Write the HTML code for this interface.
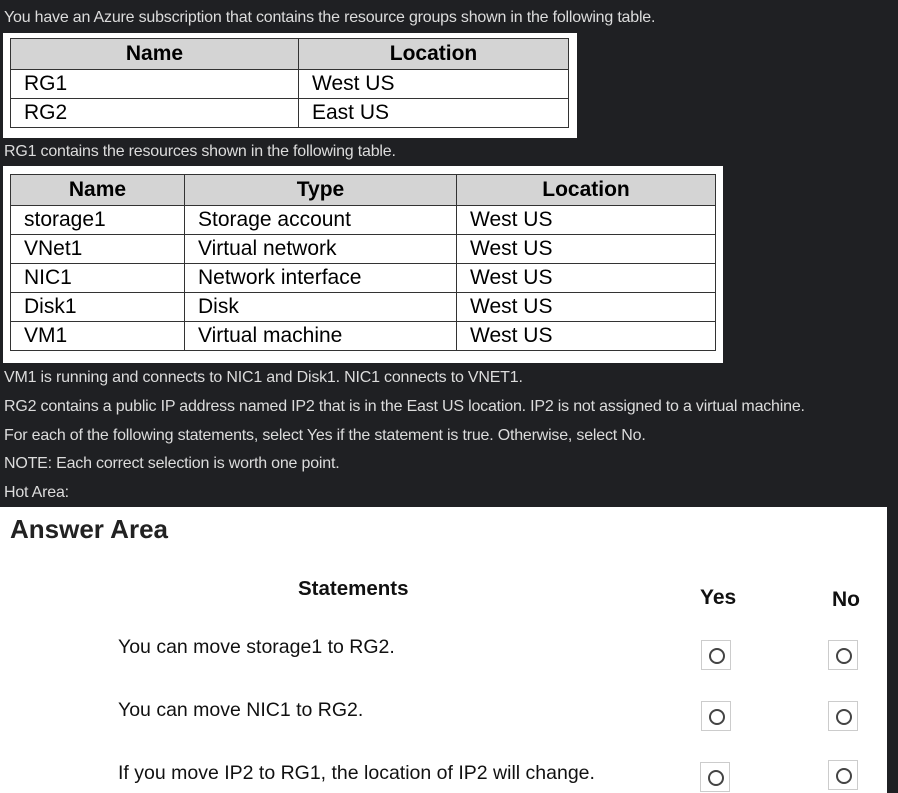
<!DOCTYPE html>
<html><head><style>
body{margin:0;width:898px;height:793px;background:#1f2023;position:relative;overflow:hidden;font-family:"Liberation Sans",Arial,sans-serif}
.t{position:absolute;left:4px;color:#dcdcdc;font-size:16px;letter-spacing:-0.2px;white-space:nowrap;line-height:20px}
.box{position:absolute;background:#fff}
table{position:absolute;border-collapse:collapse;font-size:21px;color:#000}
td,th{border:1.5px solid #333;padding:0 0 0 13px;text-align:left;font-weight:normal;height:28px;line-height:28px}
th{background:#d4d4d4;font-weight:bold;text-align:center;padding:0}
.r{position:absolute;width:30px;height:30px;border:1px solid #ccc;box-sizing:border-box}
.r:after{content:"";position:absolute;left:7px;top:7px;width:12px;height:12px;border:2px solid #444;border-radius:50%}
.s{position:absolute;left:118px;font-size:19.5px;color:#111;white-space:nowrap}
</style></head><body>
<div class="t" style="top:8px">You have an Azure subscription that contains the resource groups shown in the following table.</div>
<div class="box" style="left:3px;top:33px;width:574px;height:105px"></div>
<table style="left:10px;top:38px;width:559px">
<tr><th style="width:287px;height:30px">Name</th><th style="height:30px">Location</th></tr>
<tr><td>RG1</td><td>West US</td></tr>
<tr><td>RG2</td><td>East US</td></tr>
</table>
<div class="t" style="top:142px">RG1 contains the resources shown in the following table.</div>
<div class="box" style="left:3px;top:166px;width:720px;height:197px"></div>
<table style="left:10px;top:174px;width:706px">
<tr><th style="width:173px;height:30px">Name</th><th style="width:271px;height:30px">Type</th><th style="height:30px">Location</th></tr>
<tr><td>storage1</td><td>Storage account</td><td>West US</td></tr>
<tr><td>VNet1</td><td>Virtual network</td><td>West US</td></tr>
<tr><td>NIC1</td><td>Network interface</td><td>West US</td></tr>
<tr><td>Disk1</td><td>Disk</td><td>West US</td></tr>
<tr><td>VM1</td><td>Virtual machine</td><td>West US</td></tr>
</table>
<div class="t" style="top:368px">VM1 is running and connects to NIC1 and Disk1. NIC1 connects to VNET1.</div>
<div class="t" style="top:397px">RG2 contains a public IP address named IP2 that is in the East US location. IP2 is not assigned to a virtual machine.</div>
<div class="t" style="top:426px">For each of the following statements, select Yes if the statement is true. Otherwise, select No.</div>
<div class="t" style="top:454px">NOTE: Each correct selection is worth one point.</div>
<div class="t" style="top:483px">Hot Area:</div>
<div class="box" style="left:0;top:507px;width:887px;height:286px"></div>
<div style="position:absolute;left:10px;top:514px;font-size:26px;font-weight:bold;color:#222">Answer Area</div>
<div style="position:absolute;left:298px;top:577px;font-size:20.5px;font-weight:bold;color:#111">Statements</div>
<div style="position:absolute;left:700px;top:586px;font-size:21px;font-weight:bold;color:#111">Yes</div>
<div style="position:absolute;left:832px;top:588px;font-size:21px;font-weight:bold;color:#111">No</div>
<div class="s" style="top:636px">You can move storage1 to RG2.</div>
<div class="s" style="top:699px">You can move NIC1 to RG2.</div>
<div class="s" style="top:762px">If you move IP2 to RG1, the location of IP2 will change.</div>
<div class="r" style="left:701px;top:640px"></div><div class="r" style="left:828px;top:640px"></div>
<div class="r" style="left:701px;top:701px"></div><div class="r" style="left:828px;top:701px"></div>
<div class="r" style="left:700px;top:762px"></div><div class="r" style="left:828px;top:760px"></div>
</body></html>
